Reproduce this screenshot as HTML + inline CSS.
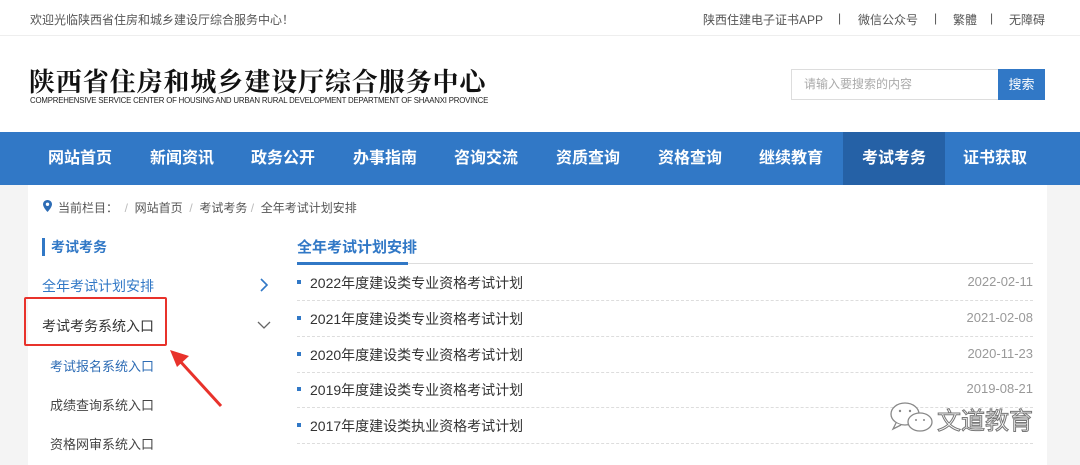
<!DOCTYPE html>
<html><head><meta charset="utf-8"><style>
*{margin:0;padding:0;box-sizing:border-box}
body{width:1080px;height:465px;overflow:hidden;background:#fff;font-family:"Liberation Sans","Noto Sans CJK SC",sans-serif;position:relative}
.a{position:absolute;white-space:nowrap}
.top{position:absolute;left:0;top:0;width:1080px;height:36px;border-bottom:1px solid #eee}
.tl{position:absolute;top:11px;font-size:12px;color:#555;white-space:nowrap}
.nav{position:absolute;left:0;top:132px;width:1080px;height:53px;background:#3178c6}
.nav span{position:absolute;top:0;height:53px;line-height:53px;width:102px;text-align:center;color:#fff;font-weight:bold;font-size:16px}
.gray{position:absolute;top:185px;height:280px;background:#f4f4f4}
.row{position:absolute;left:297px;width:736px;height:36px;border-bottom:1px dashed #ddd}
.row i{position:absolute;left:0;top:15px;width:4px;height:4px;background:#3178c6}
.row b{position:absolute;left:13px;top:8px;font-weight:normal;font-size:14px;color:#333}
.row em{position:absolute;right:0;top:9px;font-style:normal;font-size:13px;color:#999}
</style></head><body>
<div class="top"></div>
<div class="a" style="left:30px;top:11px;font-size:12px;color:#555">欢迎光临陕西省住房和城乡建设厅综合服务中心！</div>
<div class="tl" style="left:703px">陕西住建电子证书APP</div>
<div class="tl" style="left:838px">|</div>
<div class="tl" style="left:858px">微信公众号</div>
<div class="tl" style="left:934px">|</div>
<div class="tl" style="left:953px">繁體</div>
<div class="tl" style="left:990px">|</div>
<div class="tl" style="left:1009px">无障碍</div>
<div class="a" style="left:29px;top:62px;font-size:26px;font-weight:bold;color:#111;letter-spacing:0.9px;font-family:'Noto Serif CJK SC',serif">陕西省住房和城乡建设厅综合服务中心</div>
<div class="a" style="left:30px;top:96px;font-size:8px;color:#222;transform:scaleX(0.98);transform-origin:0 0;letter-spacing:-0.2px">COMPREHENSIVE SERVICE CENTER OF HOUSING AND URBAN RURAL DEVELOPMENT DEPARTMENT OF SHAANXI PROVINCE</div>
<div class="a" style="left:791px;top:69px;width:208px;height:31px;border:1px solid #ddd;font-size:12px;color:#aaa;line-height:29px;padding-left:12px">请输入要搜索的内容</div>
<div class="a" style="left:998px;top:69px;width:47px;height:31px;background:#3178c6;color:#fff;font-size:13px;line-height:31px;text-align:center">搜索</div>
<div class="nav">
<span style="left:29px">网站首页</span><span style="left:131px">新闻资讯</span><span style="left:232px">政务公开</span><span style="left:334px">办事指南</span><span style="left:435px">咨询交流</span><span style="left:537px">资质查询</span><span style="left:639px">资格查询</span><span style="left:740px">继续教育</span><span style="left:843px;background:#2561a6">考试考务</span><span style="left:944px">证书获取</span>
</div>
<div class="gray" style="left:0;width:28px"></div>
<div class="gray" style="left:1047px;width:33px"></div>
<svg class="a" style="left:43px;top:200px" width="9" height="12" viewBox="0 0 9 12"><path d="M4.5 0C2 0 0 2 0 4.3 0 7.5 4.5 12 4.5 12S9 7.5 9 4.3C9 2 7 0 4.5 0z" fill="#2d6cb5"/><circle cx="4.5" cy="4.3" r="1.7" fill="#fff"/></svg>
<div class="a" style="left:58px;top:199px;font-size:12px;color:#555">当前栏目：&nbsp;&nbsp;<span style="color:#bbb">/</span>&nbsp;&nbsp;网站首页&nbsp;&nbsp;<span style="color:#bbb">/</span>&nbsp;&nbsp;考试考务&nbsp;<span style="color:#bbb">/</span>&nbsp;&nbsp;全年考试计划安排</div>
<div class="a" style="left:42px;top:238px;width:3px;height:18px;background:#3178c6"></div>
<div class="a" style="left:51px;top:237px;font-size:14px;font-weight:bold;color:#3178c6">考试考务</div>
<div class="a" style="left:42px;top:276px;font-size:14px;color:#3178c6">全年考试计划安排</div>
<svg class="a" style="left:259px;top:278px" width="10" height="14"><path d="M2 1l6 6-6 6" stroke="#3178c6" stroke-width="1.6" fill="none"/></svg>
<div class="a" style="left:42px;top:316px;font-size:14px;color:#333">考试考务系统入口</div>
<svg class="a" style="left:257px;top:320px" width="14" height="10"><path d="M1 2l6 6 6-6" stroke="#666" stroke-width="1.3" fill="none"/></svg>
<div class="a" style="left:24px;top:297px;width:143px;height:49px;border:2px solid #e8322b;border-radius:2px"></div>
<div class="a" style="left:50px;top:356px;font-size:13px;color:#2d6cb5">考试报名系统入口</div>
<div class="a" style="left:50px;top:395px;font-size:13px;color:#444">成绩查询系统入口</div>
<div class="a" style="left:50px;top:434px;font-size:13px;color:#444">资格网审系统入口</div>
<svg class="a" style="left:165px;top:345px" width="60" height="65"><path d="M56 61L14 15" stroke="#e8322b" stroke-width="3"/><path d="M5 5L24 11 12 22z" fill="#e8322b"/></svg>
<div class="a" style="left:297px;top:236px;font-size:15px;font-weight:bold;color:#3178c6">全年考试计划安排</div>
<div class="a" style="left:297px;top:263px;width:736px;height:1px;background:#ddd"></div>
<div class="a" style="left:297px;top:262px;width:111px;height:3px;background:#3178c6"></div>
<div class="row" style="top:265px"><i></i><b>2022年度建设类专业资格考试计划</b><em>2022-02-11</em></div>
<div class="row" style="top:301px"><i></i><b>2021年度建设类专业资格考试计划</b><em>2021-02-08</em></div>
<div class="row" style="top:337px"><i></i><b>2020年度建设类专业资格考试计划</b><em>2020-11-23</em></div>
<div class="row" style="top:372px"><i></i><b>2019年度建设类专业资格考试计划</b><em>2019-08-21</em></div>
<div class="row" style="top:408px"><i></i><b>2017年度建设类执业资格考试计划</b><em></em></div>
<svg class="a" style="left:888px;top:400px" width="50" height="36"><g fill="#fff" stroke="#888" stroke-width="1.3"><ellipse cx="17" cy="14" rx="14" ry="11"/><path d="M8 23l-3 6 8-4"/><ellipse cx="32" cy="22" rx="12" ry="9"/></g><g fill="#888"><circle cx="12" cy="11" r="1.2"/><circle cx="22" cy="11" r="1.2"/><circle cx="28" cy="20" r="1"/><circle cx="36" cy="20" r="1"/></g></svg>
<div class="a" style="left:937px;top:401px;font-size:24px;color:#fff;-webkit-text-stroke:1px #777">文道教育</div>
</body></html>
